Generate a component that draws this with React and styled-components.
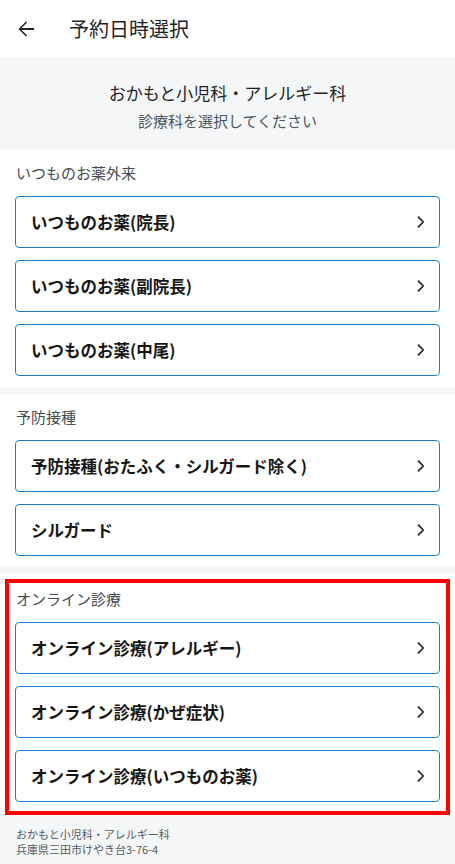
import React from "react";
import styled, { createGlobalStyle } from "styled-components";

const Global = createGlobalStyle`
  html, body { margin: 0; padding: 0; background: #f5f6f8; }
  body { font-family: "Noto Sans CJK JP", "Noto Sans", sans-serif; -webkit-font-smoothing: antialiased; }
  * { box-sizing: border-box; }
`;

const Page = styled.div`
  width: 455px;
  min-height: 864px;
  background: #f5f6f8;
  display: flex;
  flex-direction: column;
`;

const Header = styled.header`
  height: 57px;
  background: #fff;
  display: flex;
  align-items: center;
  padding: 0 0 0 14px;
  gap: 31px;
`;

const BackButton = styled.button`
  width: 24px;
  height: 24px;
  padding: 0;
  border: none;
  background: none;
  display: flex;
  align-items: center;
  justify-content: center;
  color: #222;
`;

const Title = styled.h1`
  margin: 0;
  font-size: 20px;
  font-weight: 400;
  color: #1f1f1f;
  line-height: 24px;
`;

const ClinicBand = styled.div`
  height: 93px;
  background: #f5f6f8;
  display: flex;
  flex-direction: column;
  align-items: center;
  padding-top: 23px;
`;

const ClinicName = styled.div`
  font-size: 17px;
  line-height: 26px;
  color: #1e1e1e;
`;

const ClinicSub = styled.div`
  font-size: 15px;
  line-height: 22px;
  color: #4b5560;
  margin-top: 4px;
`;

const Sections = styled.div`
  display: flex;
  flex-direction: column;
  gap: 7px;
`;

const Section = styled.section`
  position: relative;
  background: #fff;
  padding: ${(p) => (p.$last ? "14px 15px 13px" : "12px 15px 11px")};
  display: flex;
  flex-direction: column;
`;

const SectionTitle = styled.h2`
  margin: 0 0 12px 1px;
  font-size: 15px;
  font-weight: 400;
  line-height: 22px;
  color: #464c53;
`;

const CardList = styled.div`
  display: flex;
  flex-direction: column;
  gap: 12px;
`;

const Card = styled.button`
  height: 52px;
  width: 100%;
  border: 1px solid #1b7fd6;
  border-radius: 4px;
  background: #fff;
  display: flex;
  align-items: center;
  justify-content: space-between;
  padding: 0 14px 0 15px;
  font-family: inherit;
  cursor: pointer;
`;

const CardLabel = styled.span`
  font-size: 16.5px;
  font-weight: 700;
  color: #161616;
  line-height: 24px;
`;

const Highlight = styled.div`
  position: absolute;
  top: 5px;
  left: 5px;
  right: 5px;
  bottom: 0;
  border: 4px solid #ff0000;
  pointer-events: none;
`;

const Footer = styled.footer`
  flex: 1;
  background: #f5f6f8;
  padding: 12px 16px 12px;
  font-size: 11px;
  line-height: 15px;
  color: #545b62;
`;

const Chevron = () => (
  <svg width="8" height="12" viewBox="0 0 8 12" fill="none">
    <path d="M1.5 1.2 L6.2 6 L1.5 10.8" stroke="#2a2a2a" strokeWidth="1.7" strokeLinecap="square" />
  </svg>
);

const ArrowBack = () => (
  <svg width="24" height="24" viewBox="0 0 24 24">
    <path fill="currentColor" d="M20 11.1H7.6l5.5-5.5L12 4.5 4.5 12l7.5 7.5 1.1-1.1-5.5-5.5H20z" />
  </svg>
);

const sections = [
  {
    title: "いつものお薬外来",
    items: ["いつものお薬(院長)", "いつものお薬(副院長)", "いつものお薬(中尾)"],
  },
  {
    title: "予防接種",
    items: ["予防接種(おたふく・シルガード除く)", "シルガード"],
  },
  {
    title: "オンライン診療",
    items: ["オンライン診療(アレルギー)", "オンライン診療(かぜ症状)", "オンライン診療(いつものお薬)"],
    highlight: true,
  },
];

export default function App() {
  return (
    <>
      <Global />
      <Page>
        <Header>
          <BackButton aria-label="戻る">
            <ArrowBack />
          </BackButton>
          <Title>予約日時選択</Title>
        </Header>
        <ClinicBand>
          <ClinicName>おかもと小児科・アレルギー科</ClinicName>
          <ClinicSub>診療科を選択してください</ClinicSub>
        </ClinicBand>
        <Sections>
          {sections.map((s, i) => (
            <Section key={s.title} $last={i === sections.length - 1}>
              <SectionTitle>{s.title}</SectionTitle>
              <CardList>
                {s.items.map((it) => (
                  <Card key={it}>
                    <CardLabel>{it}</CardLabel>
                    <Chevron />
                  </Card>
                ))}
              </CardList>
              {s.highlight && <Highlight />}
            </Section>
          ))}
        </Sections>
        <Footer>
          <div>おかもと小児科・アレルギー科</div>
          <div>兵庫県三田市けやき台3-76-4</div>
        </Footer>
      </Page>
    </>
  );
}
